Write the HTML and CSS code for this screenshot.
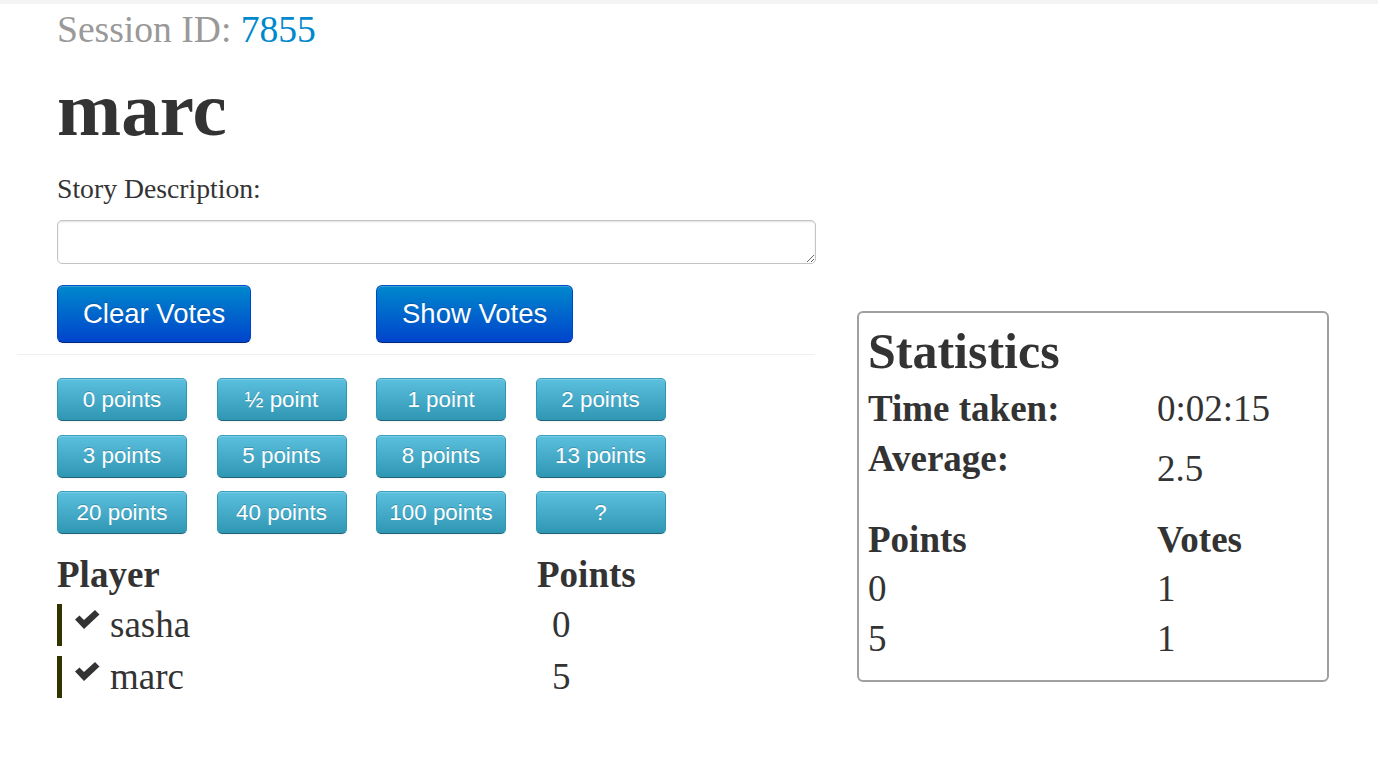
FILE: index.html
```html
<!DOCTYPE html>
<html lang="en">
<head>
  <meta charset="UTF-8" />
  <title>Planning Poker - Session 7855</title>
  <link rel="stylesheet" href="styles.css">
</head>
<body>
  <div class="topbar"></div>

  <div class="page">
    <div class="left">
      <h3 class="session">Session ID: <a href="#">7855</a></h3>
      <h1 class="player-name">marc</h1>

      <label class="story-label" for="story">Story Description:</label>
      <textarea id="story" class="story"></textarea>

      <div class="actions">
        <div><button class="btn btn-primary">Clear Votes</button></div>
        <div><button class="btn btn-primary">Show Votes</button></div>
      </div>

      <hr class="divider">

      <!-- vote cards -->
      <div class="cards">
        <button class="btn btn-info">0 points</button>
        <button class="btn btn-info">&frac12; point</button>
        <button class="btn btn-info">1 point</button>
        <button class="btn btn-info">2 points</button>
        <button class="btn btn-info">3 points</button>
        <button class="btn btn-info">5 points</button>
        <button class="btn btn-info">8 points</button>
        <button class="btn btn-info">13 points</button>
        <button class="btn btn-info">20 points</button>
        <button class="btn btn-info">40 points</button>
        <button class="btn btn-info">100 points</button>
        <button class="btn btn-info">?</button>
      </div>

      <div class="players">
        <div class="players-head">
          <span>Player</span>
          <span>Points</span>
        </div>
        <div class="player-row">
          <span class="player">
            <svg class="check" viewBox="0 0 25 20" width="25" height="20"><path d="M0 9.5 L4.5 5.5 L9 10 L20 0 L24.5 4.5 L9 19 Z" fill="#333"/></svg>
            sasha
          </span>
          <span class="vote">0</span>
        </div>
        <div class="player-row">
          <span class="player">
            <svg class="check" viewBox="0 0 25 20" width="25" height="20"><path d="M0 9.5 L4.5 5.5 L9 10 L20 0 L24.5 4.5 L9 19 Z" fill="#333"/></svg>
            marc
          </span>
          <span class="vote">5</span>
        </div>
      </div>
    </div>

    <div class="right">
      <div class="stats">
        <h2>Statistics</h2>
        <div class="stat-row">
          <b>Time taken:</b>
          <span>0:02:15</span>
        </div>
        <div class="stat-row">
          <b>Average:</b>
          <span class="avg">2.5</span>
        </div>
        <div class="tally">
          <div class="tally-row tally-head">
            <b>Points</b>
            <b>Votes</b>
          </div>
          <div class="tally-row">
            <span>0</span>
            <span>1</span>
          </div>
          <div class="tally-row">
            <span>5</span>
            <span>1</span>
          </div>
        </div>
      </div>
    </div>
  </div>
</body>
</html>
```

FILE: styles.css
```css
body {
  margin: 0;
  padding: 0;
  font-family: "Liberation Serif", "Times New Roman", serif;
  color: #333;
  background-color: #fff;
}
.topbar {
  height: 4px;
  background-color: #f4f4f4;
}
.page {
  display: grid;
  grid-template-columns: 798px 472px;
  column-gap: 42px;
  padding-left: 17px;
}
.left {
  padding-left: 40px;
}

/* header */
.session {
  margin: 6px 0 0;
  font-size: 37.6px;
  line-height: 40px;
  font-weight: normal;
  color: #999;
}
.session a {
  color: #0088cc;
  text-decoration: none;
}
.player-name {
  margin: 19px 0 0;
  font-size: 77px;
  line-height: 80px;
  font-weight: bold;
}
.story-label {
  display: block;
  margin-top: 25px;
  font-size: 27.7px;
  line-height: 30px;
}
.story {
  display: block;
  box-sizing: border-box;
  width: 759px;
  height: 44px;
  margin-top: 16px;
  padding: 6px;
  border: 1px solid #c4c4c4;
  border-radius: 5px;
  box-shadow: inset 0 1px 2px rgba(0, 0, 0, 0.12);
  font-family: inherit;
  font-size: 20px;
}

/* buttons */
.btn {
  font-family: "Liberation Sans", Arial, sans-serif;
  color: #fff;
  cursor: pointer;
  text-shadow: 0 -1px 0 rgba(0, 0, 0, 0.2);
  border: 1px solid rgba(0, 0, 0, 0.1);
  box-shadow: inset 0 1px 0 rgba(255, 255, 255, 0.2), 0 1px 2px rgba(0, 0, 0, 0.05);
  padding: 0;
}
.btn-primary {
  height: 58px;
  padding: 0 25px;
  font-size: 27.5px;
  border-radius: 6px;
  background-image: linear-gradient(#0088cc, #0044cc);
  border-color: #0050c8 #0044cc #002a80;
}
.btn-info {
  height: 43px;
  font-size: 22.4px;
  border-radius: 5px;
  background-image: linear-gradient(#5bc0de, #2f96b4);
  border-color: #3aa0bf #2f96b4 #1f6377;
}
.actions {
  display: grid;
  grid-template-columns: 289.5px 290px;
  column-gap: 29.5px;
  margin-top: 21px;
}
.divider {
  margin: 11px 0 0 -40px;
  border: 0;
  border-top: 1px solid #eee;
  border-bottom: 1px solid #fff;
}
.cards {
  display: grid;
  grid-template-columns: repeat(4, 130px);
  column-gap: 29.5px;
  row-gap: 13.5px;
  margin-top: 22px;
}

/* players table */
.players {
  margin-top: 21px;
  font-size: 37px;
}
.players-head,
.player-row {
  display: grid;
  grid-template-columns: 480px 1fr;
}
.players-head {
  line-height: 40px;
  font-weight: bold;
  margin-bottom: 9px;
}
.player-row {
  height: 42px;
  line-height: 42px;
  margin-bottom: 10px;
}
.player {
  display: flex;
  align-items: flex-start;
  border-left: 5px solid #333300;
  padding-left: 13px;
}
.check {
  margin: 6px 10px 0 0;
  filter: blur(0.5px);
}
.vote {
  padding-left: 15px;
}

/* statistics */
.stats {
  margin-top: 307px;
  border: 2px solid #a0a0a0;
  border-radius: 6px;
  padding: 10px 9px 16px;
  font-size: 37px;
}
.stats h2 {
  margin: 0;
  font-size: 50px;
  line-height: 56px;
}
.stat-row,
.tally-row {
  display: grid;
  grid-template-columns: 289px 1fr;
}
.stat-row {
  line-height: 50px;
}
.stat-row:first-of-type {
  margin-top: 5px;
}
.avg {
  padding-top: 10px;
}
.tally {
  margin-top: 21px;
}
.tally-row {
  line-height: 50px;
}
.tally-head {
  line-height: 49px;
}
```
